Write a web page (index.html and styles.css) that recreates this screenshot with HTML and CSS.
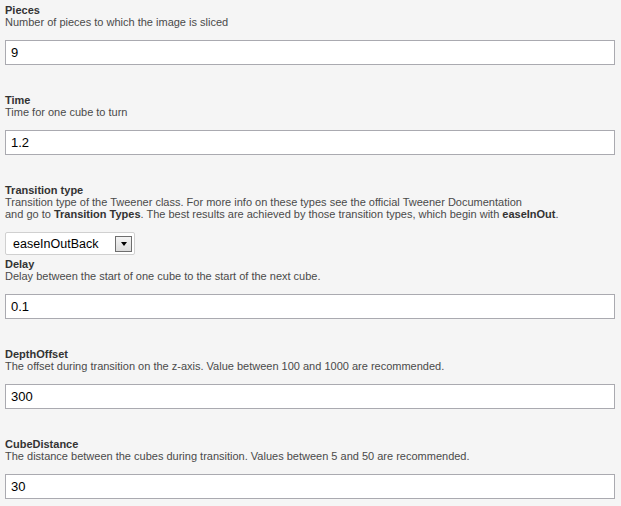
FILE: index.html
```html
<!DOCTYPE html>
<html>
<head>
<meta charset="utf-8">
<link rel="stylesheet" href="styles.css">
</head>
<body>
<div class="form">
  <div class="field">
    <div class="label">Pieces</div>
    <div class="desc">Number of pieces to which the image is sliced</div>
    <input class="text" type="text" value="9">
  </div>
  <div class="field">
    <div class="label">Time</div>
    <div class="desc">Time for one cube to turn</div>
    <input class="text" type="text" value="1.2">
  </div>
  <div class="field field-select">
    <div class="label">Transition type</div>
    <div class="desc">Transition type of the Tweener class. For more info on these types see the official Tweener Documentation<br>and go to <b>Transition Types</b>. The best results are achieved by those transition types, which begin with <b>easeInOut</b>.</div>
    <div class="select">
      <span class="select-value">easeInOutBack</span>
      <span class="select-btn"><span class="arrow"></span></span>
    </div>
  </div>
  <div class="field field-after-select">
    <div class="label">Delay</div>
    <div class="desc">Delay between the start of one cube to the start of the next cube.</div>
    <input class="text" type="text" value="0.1">
  </div>
  <div class="field">
    <div class="label">DepthOffset</div>
    <div class="desc">The offset during transition on the z-axis. Value between 100 and 1000 are recommended.</div>
    <input class="text" type="text" value="300">
  </div>
  <div class="field">
    <div class="label">CubeDistance</div>
    <div class="desc">The distance between the cubes during transition. Values between 5 and 50 are recommended.</div>
    <input class="text" type="text" value="30">
  </div>
</div>
</body>
</html>
```
FILE: styles.css
```css
html, body {
  margin: 0;
  padding: 0;
  background: #f5f5f5;
}
body {
  font-family: "Liberation Sans", Arial, sans-serif;
  font-size: 11px;
  color: #444;
}
.form {
  padding: 4px 6px 0 5px;
  display: flex;
  flex-direction: column;
}
.field {
  display: flex;
  flex-direction: column;
  align-items: flex-start;
  margin-bottom: 29px;
}
.field-select {
  margin-bottom: 3px;
}
.label {
  font-weight: bold;
  line-height: 12px;
  color: #333;
}
.desc {
  line-height: 12px;
  color: #4a4a4a;
}
.desc b {
  color: #333;
}
.text {
  box-sizing: border-box;
  margin: 12px 0 0 0;
  width: 610px;
  height: 25px;
  border: 1px solid #aaaab0;
  background: #fff;
  padding: 0 5px;
  font-family: "Liberation Sans", Arial, sans-serif;
  font-size: 13px;
  color: #000;
  outline: none;
}
.select {
  box-sizing: border-box;
  margin-top: 12px;
  width: 130px;
  height: 23px;
  border: 1px solid #d0d0d0;
  border-radius: 2px;
  background: #fff;
  display: flex;
  align-items: center;
  justify-content: space-between;
  padding: 0 2px 0 7px;
}
.select-value {
  font-size: 12.5px;
  color: #000;
}
.select-btn {
  box-sizing: border-box;
  width: 17px;
  height: 16px;
  border: 1px solid #6e6e6e;
  background: linear-gradient(#f4f4f4, #dcdcdc);
  display: flex;
  align-items: center;
  justify-content: center;
}
.arrow {
  width: 0;
  height: 0;
  border-left: 3.5px solid transparent;
  border-right: 3.5px solid transparent;
  border-top: 4px solid #000;
  margin-top: 1px;
}
```
